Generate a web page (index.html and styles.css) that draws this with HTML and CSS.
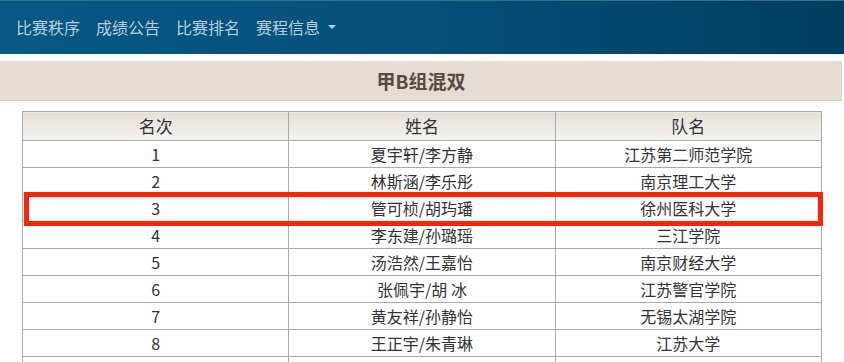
FILE: index.html
```html
<!DOCTYPE html>
<html lang="zh">
<head>
<meta charset="utf-8">
<link rel="stylesheet" href="styles.css">
</head>
<body>
<nav class="navbar">
  <a class="nav-item">比赛秩序</a>
  <a class="nav-item">成绩公告</a>
  <a class="nav-item">比赛排名</a>
  <a class="nav-item dropdown">赛程信息 <span class="caret"></span></a>
</nav>
<div class="title-bar">甲B组混双</div>
<div class="table-wrap">
  <table class="rank">
    <thead>
      <tr><th>名次</th><th>姓名</th><th>队名</th></tr>
    </thead>
    <tbody>
      <tr><td>1</td><td>夏宇轩/李方静</td><td>江苏第二师范学院</td></tr>
      <tr><td>2</td><td>林斯涵/李乐彤</td><td>南京理工大学</td></tr>
      <tr><td>3</td><td>管可桢/胡玙璠</td><td>徐州医科大学</td></tr>
      <tr><td>4</td><td>李东建/孙璐瑶</td><td>三江学院</td></tr>
      <tr><td>5</td><td>汤浩然/王嘉怡</td><td>南京财经大学</td></tr>
      <tr><td>6</td><td>张佩宇/胡 冰</td><td>江苏警官学院</td></tr>
      <tr><td>7</td><td>黄友祥/孙静怡</td><td>无锡太湖学院</td></tr>
      <tr><td>8</td><td>王正宇/朱青琳</td><td>江苏大学</td></tr>
      <tr><td>&nbsp;</td><td>&nbsp;</td><td>&nbsp;</td></tr>
    </tbody>
  </table>
  <div class="highlight"></div>
</div>
</body>
</html>
```
FILE: styles.css
```css
html, body {
  margin: 0;
  padding: 0;
  background: #ffffff;
  font-family: "Noto Sans CJK SC", "Noto Sans", sans-serif;
  color: #333333;
  overflow: hidden;
  height: 362px;
}
.navbar {
  height: 54px;
  box-sizing: border-box;
  display: flex;
  align-items: center;
  gap: 16px;
  padding: 0 16px 2px;
  background: linear-gradient(90deg, #085884 0%, #03507a 50%, #003e5f 100%);
  border-top: 1px solid #3a6f90;
}
.nav-item {
  font-size: 16px;
  color: #b6cfdf;
  line-height: 20px;
  display: flex;
  align-items: center;
}
.caret {
  display: inline-block;
  width: 0;
  height: 0;
  margin-left: 8px;
  border-left: 4px solid transparent;
  border-right: 4px solid transparent;
  border-top: 4px solid #b6cfdf;
}
.title-bar {
  margin-top: 7px;
  margin-right: 2px;
  height: 39px;
  line-height: 39px;
  text-align: center;
  background: #e4dcd5;
  border-bottom: 1px solid #d2cbc4;
  font-size: 19px;
  font-weight: bold;
  color: #5a4a40;
}
.table-wrap {
  position: relative;
  margin: 10px 0 0 22px;
  width: 800px;
}
.rank {
  width: 800px;
  border-collapse: collapse;
  table-layout: fixed;
  border: 1px solid #aaaaaa;
}
.rank th, .rank td {
  border: 1px solid #aaaaaa;
  text-align: center;
  padding: 0;
  color: #333333;
  overflow: hidden;
}
.rank th {
  height: 28px;
  line-height: 28px;
  font-size: 17px;
  font-weight: normal;
  background: linear-gradient(180deg, #e6e0da 0%, #f4f2ef 100%);
}
.rank td {
  height: 26px;
  line-height: 26px;
  font-size: 16px;
}
.highlight {
  position: absolute;
  left: 2px;
  top: 81px;
  width: 799px;
  height: 34px;
  box-sizing: border-box;
  border: 5px solid #ff2400;
}
```
